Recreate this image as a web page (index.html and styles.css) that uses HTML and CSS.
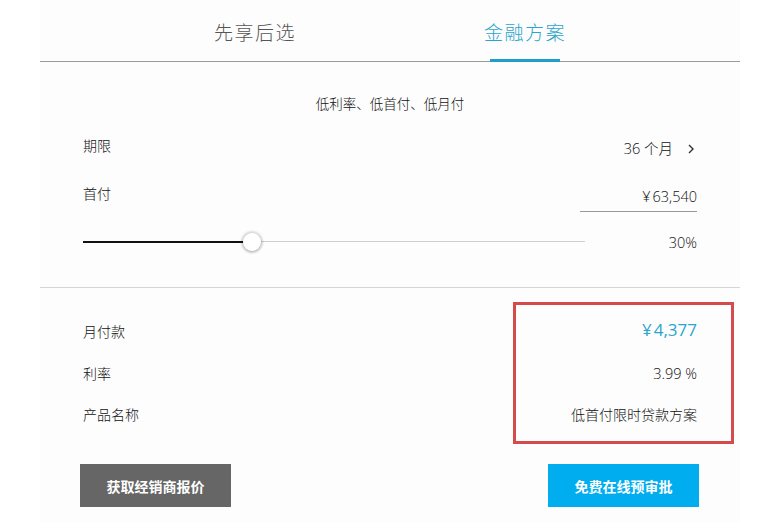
FILE: index.html
```html
<!DOCTYPE html>
<html lang="zh-CN">
<head>
<meta charset="utf-8">
<title>金融方案</title>
<link rel="stylesheet" href="styles.css">
</head>
<body>
<div class="panel">
  <div class="tabs">
    <div class="tab">先享后选</div>
    <div class="tab active">金融方案</div>
  </div>
  <div class="calc">
    <p class="subtitle">低利率、低首付、低月付</p>
    <div class="row row-term">
      <span class="label">期限</span>
      <span class="value">36 个月<span class="chev">
        <svg width="8" height="12" viewBox="0 0 8 12"><path d="M2 2 L6 6 L2 10" fill="none" stroke="#333" stroke-width="1.4"/></svg>
      </span></span>
    </div>
    <div class="row row-down">
      <span class="label">首付</span>
      <span class="value input"><span class="yen">¥</span>63,540</span>
    </div>
    <div class="row row-slider">
      <div class="slider">
        <div class="track"></div>
        <div class="fill" style="width: 33.7%"></div>
        <div class="thumb" style="left: 33.7%"></div>
      </div>
      <span class="value">30%</span>
    </div>
  </div>
  <div class="result">
    <div class="highlight"></div>
    <div class="row row-r1">
      <span class="label">月付款</span>
      <span class="value price"><span class="yen">¥</span>4,377</span>
    </div>
    <div class="row row-r2">
      <span class="label">利率</span>
      <span class="value">3.99 %</span>
    </div>
    <div class="row row-r3">
      <span class="label">产品名称</span>
      <span class="value">低首付限时贷款方案</span>
    </div>
    <div class="actions">
      <button class="btn btn-gray">获取经销商报价</button>
      <button class="btn btn-blue">免费在线预审批</button>
    </div>
  </div>
</div>
</body>
</html>
```
FILE: styles.css
```css
* { box-sizing: border-box; }
html, body { margin: 0; padding: 0; background: #ffffff; }
body {
  font-family: "Open Sans", "Noto Sans CJK SC", sans-serif;
  color: #333;
  font-size: 13px;
}
.panel {
  width: 700px;
  margin-left: 40px;
  background: #fdfdfd;
  height: 522px;
}
.tabs {
  display: flex;
  justify-content: center;
  height: 62px;
  border-bottom: 1px solid #9a9a9a;
}
.tab {
  width: 270px;
  text-align: center;
  font-size: 19px;
  font-weight: 300;
  letter-spacing: 1.5px;
  color: #555;
  padding-top: 19px;
  line-height: 28px;
  position: relative;
}
.tab.active { color: #2aa5cb; }
.tab.active::after {
  content: "";
  position: absolute;
  left: 50%;
  bottom: -1px;
  width: 70px;
  margin-left: -35px;
  height: 3px;
  background: #1e9ec9;
}
.calc {
  padding: 0 43px;
  height: 226px;
  border-bottom: 1px solid #d6d6d6;
}
.subtitle {
  margin: 0;
  padding-top: 33px;
  line-height: 18px;
  text-align: center;
  font-size: 13.5px;
  font-weight: 300;
  color: #111;
}
.row {
  display: flex;
  justify-content: space-between;
  align-items: center;
}
.label { font-size: 14px; color: #111; font-weight: 300; }
.value { font-size: 14.5px; color: #111; font-weight: 300; }
.yen { margin-right: 2px; }
.row-term { margin-top: 24px; height: 22px; }
.row-term .label { margin-top: -6px; }
.chev { display: inline-block; margin-left: 14px; margin-right: 2px; vertical-align: -1px; }
.row-down { margin-top: 24px; height: 29px; align-items: flex-start; }
.input {
  width: 117px;
  text-align: right;
  border-bottom: 1px solid #999;
  padding-top: 5px;
  height: 29px;
  line-height: 18px;
}
.row-slider { margin-top: 19px; height: 22px; }
.slider {
  position: relative;
  width: 502px;
  height: 22px;
}
.track {
  position: absolute;
  left: 0; right: 0;
  top: 10px;
  height: 1px;
  background: #cfcfcf;
}
.fill {
  position: absolute;
  left: 0;
  top: 10px;
  height: 2px;
  background: #111;
}
.thumb {
  position: absolute;
  top: 2px;
  width: 18px;
  height: 18px;
  margin-left: -9px;
  border-radius: 50%;
  background: #fff;
  box-shadow: 0 0 2px 2px rgba(0,0,0,0.12), 0 1px 3px rgba(0,0,0,0.2);
}
.result {
  position: relative;
  padding: 0 43px;
}
.highlight {
  position: absolute;
  left: 473px;
  top: 14px;
  width: 221px;
  height: 142px;
  border: 3px solid #d54a4b;
  pointer-events: none;
}
.row-r1 { padding-top: 31px; height: 52px; }
.row-r1 .label { margin-top: 2px; }
.price { font-size: 17px; color: #2aa5cb; font-weight: 400; }
.row-r2 { margin-top: 23px; height: 20px; }
.row-r3 { margin-top: 21px; height: 20px; }
.row-r3 .value { font-size: 14px; font-weight: 300; color: #111; }
.actions {
  display: flex;
  justify-content: space-between;
  margin-top: 40px;
}
.btn {
  border: none;
  height: 43px;
  width: 151px;
  color: #fff;
  font-family: "Noto Sans CJK SC", sans-serif;
  font-size: 14px;
  font-weight: 700;
  cursor: pointer;
}
.btn-gray { background: #666; margin-left: -3px; }
.btn-blue { background: #00aeef; margin-right: -2px; }
```
